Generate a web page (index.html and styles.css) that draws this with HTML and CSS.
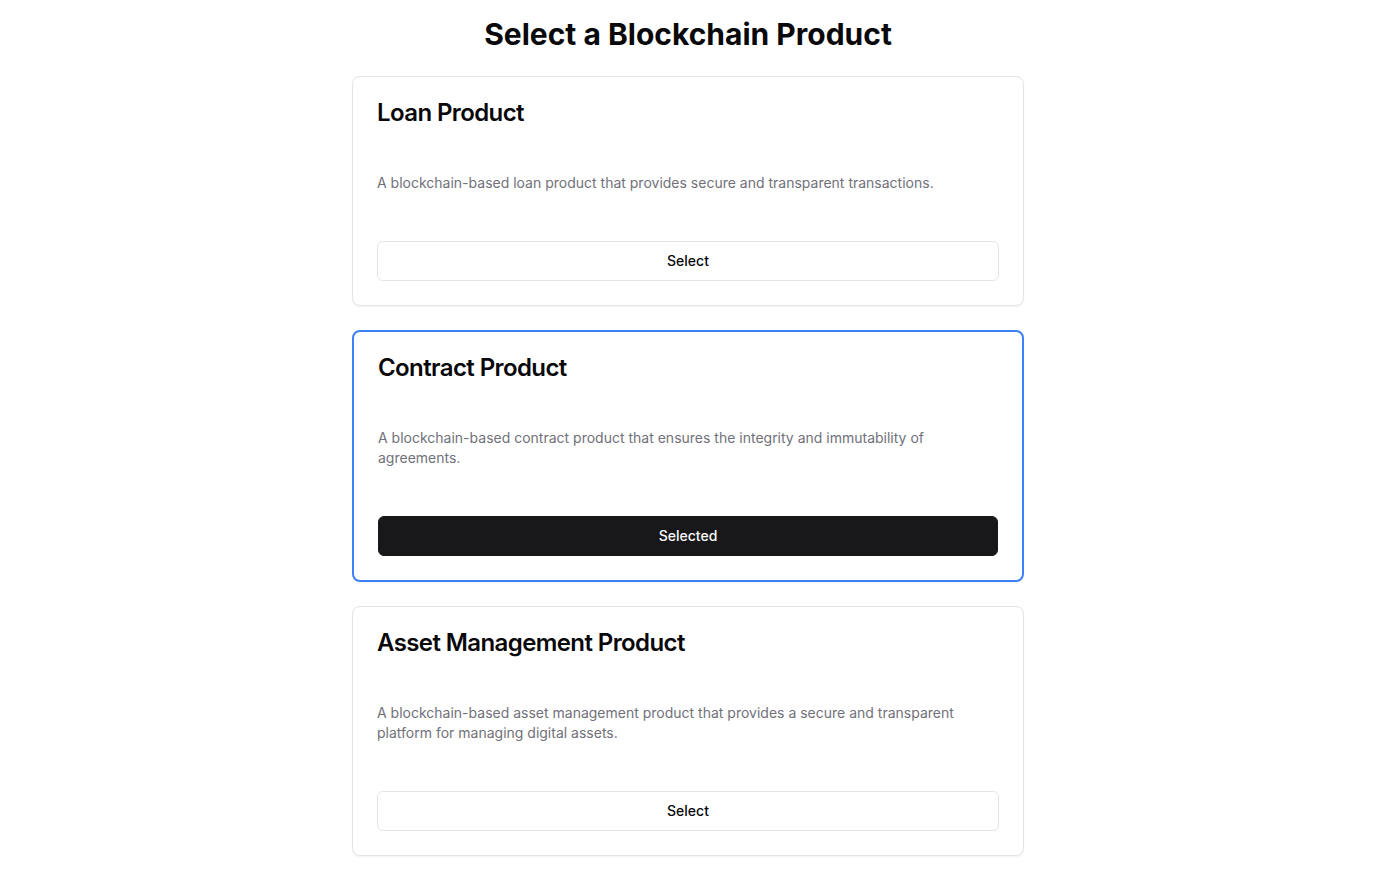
FILE: index.html
```html
<!DOCTYPE html>
<html lang="en">
<head>
<meta charset="utf-8">
<title>Select a Blockchain Product</title>
<link rel="stylesheet" href="styles.css">
</head>
<body>
<main class="page">
  <h1 class="page-title">Select a Blockchain Product</h1>
  <div class="card-list">
    <section class="card">
      <h2 class="card-title">Loan Product</h2>
      <p class="card-desc">A blockchain-based loan product that provides secure and transparent transactions.</p>
      <button class="btn btn-outline">Select</button>
    </section>
    <section class="card card-selected">
      <h2 class="card-title">Contract Product</h2>
      <p class="card-desc">A blockchain-based contract product that ensures the integrity and immutability of agreements.</p>
      <button class="btn btn-solid">Selected</button>
    </section>
    <section class="card">
      <h2 class="card-title">Asset Management Product</h2>
      <p class="card-desc">A blockchain-based asset management product that provides a secure and transparent platform for managing digital assets.</p>
      <button class="btn btn-outline">Select</button>
    </section>
  </div>
</main>
</body>
</html>
```

FILE: styles.css
```css
* { box-sizing: border-box; }
html, body { margin: 0; padding: 0; background: #ffffff; }
body {
  font-family: Inter, "Noto Sans", "Liberation Sans", sans-serif;
  color: #09090b;
}
.page {
  padding: 16px 16px 24px;
  display: flex;
  flex-direction: column;
  align-items: center;
}
.page-title {
  margin: 0 0 24px;
  font-size: 30px;
  line-height: 36px;
  font-weight: 700;
  letter-spacing: 0;
}
.card-list {
  width: 672px;
  display: flex;
  flex-direction: column;
  gap: 24px;
}
.card {
  border: 1px solid #e4e4e7;
  border-radius: 8px;
  box-shadow: 0 1px 2px rgba(0,0,0,0.05);
  padding: 24px;
  display: flex;
  flex-direction: column;
  background: #fff;
}
.card-selected {
  border: 2px solid #3b82f6;
}
.card-title {
  margin: 0;
  font-size: 24px;
  line-height: 24px;
  font-weight: 600;
  letter-spacing: -0.6px;
}
.card-desc {
  margin: 48px 0 48px;
  font-size: 14px;
  line-height: 20px;
  color: #71717a;
}
.btn {
  height: 40px;
  width: 100%;
  border-radius: 6px;
  font-family: inherit;
  font-size: 14px;
  line-height: 20px;
  font-weight: 500;
  padding: 0 16px 1px;
  cursor: pointer;
}
.btn-outline {
  background: #fff;
  border: 1px solid #e4e4e7;
  color: #09090b;
}
.btn-solid {
  background: #18181b;
  border: 1px solid #18181b;
  color: #fafafa;
}
```
